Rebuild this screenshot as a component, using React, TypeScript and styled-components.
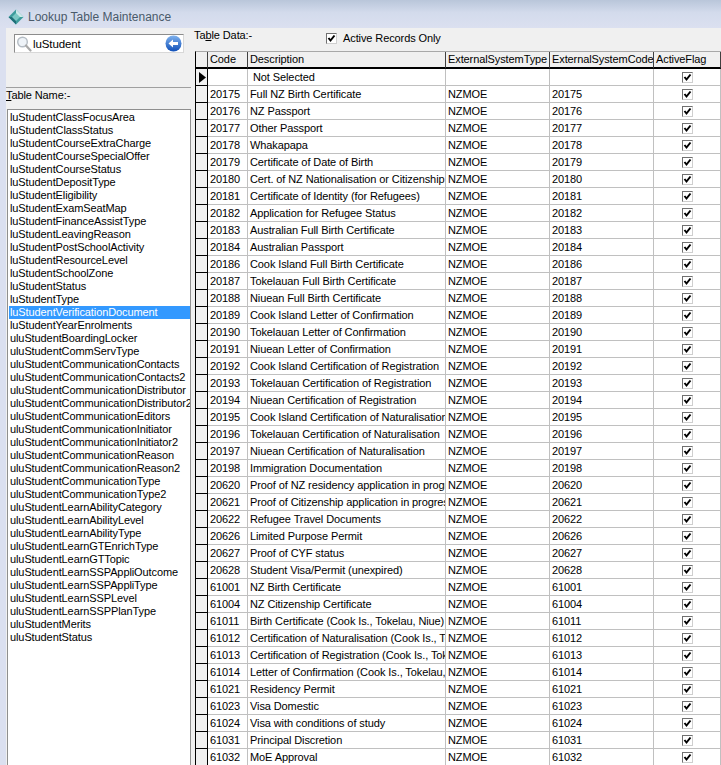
import React from 'react';
import styled, { createGlobalStyle } from 'styled-components';

const TABLE_NAMES = [
  'luStudentClassFocusArea', 'luStudentClassStatus', 'luStudentCourseExtraCharge', 'luStudentCourseSpecialOffer',
  'luStudentCourseStatus', 'luStudentDepositType', 'luStudentEligibility', 'luStudentExamSeatMap',
  'luStudentFinanceAssistType', 'luStudentLeavingReason', 'luStudentPostSchoolActivity', 'luStudentResourceLevel',
  'luStudentSchoolZone', 'luStudentStatus', 'luStudentType', 'luStudentVerificationDocument',
  'luStudentYearEnrolments', 'uluStudentBoardingLocker', 'uluStudentCommServType', 'uluStudentCommunicationContacts',
  'uluStudentCommunicationContacts2', 'uluStudentCommunicationDistributor', 'uluStudentCommunicationDistributor2',
  'uluStudentCommunicationEditors', 'uluStudentCommunicationInitiator', 'uluStudentCommunicationInitiator2',
  'uluStudentCommunicationReason', 'uluStudentCommunicationReason2', 'uluStudentCommunicationType',
  'uluStudentCommunicationType2', 'uluStudentLearnAbilityCategory', 'uluStudentLearnAbilityLevel',
  'uluStudentLearnAbilityType', 'uluStudentLearnGTEnrichType', 'uluStudentLearnGTTopic', 'uluStudentLearnSSPAppliOutcome',
  'uluStudentLearnSSPAppliType', 'uluStudentLearnSSPLevel', 'uluStudentLearnSSPPlanType', 'uluStudentMerits', 'uluStudentStatus',
];

const ROWS: [string, string][] = [
  ['20175', 'Full NZ Birth Certificate'],
  ['20176', 'NZ Passport'],
  ['20177', 'Other Passport'],
  ['20178', 'Whakapapa'],
  ['20179', 'Certificate of Date of Birth'],
  ['20180', 'Cert. of NZ Nationalisation or Citizenship'],
  ['20181', 'Certificate of Identity (for Refugees)'],
  ['20182', 'Application for Refugee Status'],
  ['20183', 'Australian Full Birth Certificate'],
  ['20184', 'Australian Passport'],
  ['20186', 'Cook Island Full Birth Certificate'],
  ['20187', 'Tokelauan Full Birth Certificate'],
  ['20188', 'Niuean Full Birth Certificate'],
  ['20189', 'Cook Island Letter of Confirmation'],
  ['20190', 'Tokelauan Letter of Confirmation'],
  ['20191', 'Niuean Letter of Confirmation'],
  ['20192', 'Cook Island Certification of Registration'],
  ['20193', 'Tokelauan Certification of Registration'],
  ['20194', 'Niuean Certification of Registration'],
  ['20195', 'Cook Island Certification of Naturalisation'],
  ['20196', 'Tokelauan Certification of Naturalisation'],
  ['20197', 'Niuean Certification of Naturalisation'],
  ['20198', 'Immigration Documentation'],
  ['20620', 'Proof of NZ residency application in progress'],
  ['20621', 'Proof of Citizenship application in progress'],
  ['20622', 'Refugee Travel Documents'],
  ['20626', 'Limited Purpose Permit'],
  ['20627', 'Proof of CYF status'],
  ['20628', 'Student Visa/Permit (unexpired)'],
  ['61001', 'NZ Birth Certificate'],
  ['61004', 'NZ Citizenship Certificate'],
  ['61011', 'Birth Certificate (Cook Is., Tokelau, Niue)'],
  ['61012', 'Certification of Naturalisation (Cook Is., Tokelau)'],
  ['61013', 'Certification of Registration (Cook Is., Tokelau)'],
  ['61014', 'Letter of Confirmation (Cook Is., Tokelau, Niue)'],
  ['61021', 'Residency Permit'],
  ['61023', 'Visa Domestic'],
  ['61024', 'Visa with conditions of study'],
  ['61031', 'Principal Discretion'],
  ['61032', 'MoE Approval'],
];

const GlobalStyle = createGlobalStyle`
  html, body {
    margin: 0;
    padding: 0;
    height: 765px;
    overflow: hidden;
    background: #dbe0f0;
    font-family: "Liberation Sans", Arial, sans-serif;
    font-size: 11px;
    letter-spacing: -0.1px;
    color: #000;
  }
`;

const S = {
  Window: styled.div`
    width: 721px;
    height: 765px;
    display: flex;
    flex-direction: column;
    overflow: hidden;
  `,
  TitleBar: styled.div`
    height: 28px;
    flex: none;
    display: flex;
    align-items: center;
    gap: 4px;
    padding: 5px 0 0 8px;
    box-sizing: border-box;
    background: linear-gradient(#b9c6da, #d3dbec 45%, #dbe0f0);
    color: #4a5a6a;
    font-size: 12px;
    letter-spacing: 0;
  `,
  Body: styled.div`
    flex: 1;
    display: flex;
    min-height: 0;
    margin-left: 6px;
    background: #f0f0f0;
  `,
  LeftPane: styled.div`
    width: 185px;
    flex: none;
    display: flex;
    flex-direction: column;
  `,
  SearchPanel: styled.div`
    height: 60px;
    flex: none;
    box-sizing: border-box;
    padding: 6px 0 0 8px;
    border-bottom: 1px solid #a0a0a0;
  `,
  SearchBox: styled.div`
    width: 170px;
    height: 19px;
    box-sizing: border-box;
    display: flex;
    align-items: center;
    gap: 1px;
    padding: 0 1px;
    background: #fff;
    border: 1px solid #8c8c8c;
    border-right-color: #d8d8d8;
    border-bottom-color: #d8d8d8;
    font-size: 11.5px;
  `,
  SearchText: styled.span`
    flex: 1;
  `,
  FieldLabel: styled.div`
    height: 21px;
    line-height: 15px;
    white-space: nowrap;
    u {
      text-decoration: underline;
    }
  `,
  List: styled.div`
    flex: 1;
    min-height: 0;
    width: 184px;
    box-sizing: border-box;
    margin-left: 1px;
    padding: 1px 0 0 1px;
    background: #fff;
    border: 1px solid #8f8f8f;
    border-bottom: none;
    overflow: hidden;
  `,
  ListItem: styled.div<{ $selected?: boolean }>`
    height: 13px;
    line-height: 13px;
    padding-left: 1px;
    white-space: nowrap;
    background: ${({ $selected }) => ($selected ? '#3399ff' : 'transparent')};
    color: ${({ $selected }) => ($selected ? '#fff' : '#000')};
  `,
  RightPane: styled.div`
    flex: 1;
    min-width: 0;
    display: flex;
    flex-direction: column;
    padding-left: 4px;
  `,
  Toolbar: styled.div`
    height: 23px;
    flex: none;
    display: flex;
    align-items: flex-start;
  `,
  DataLabel: styled.div`
    width: 132px;
    margin-left: -1px;
    line-height: 14px;
    u {
      text-decoration: underline;
    }
  `,
  ActiveOnly: styled.label`
    display: flex;
    align-items: center;
    gap: 6px;
    padding-top: 4px;
    line-height: 13px;
  `,
  Grid: styled.table`
    border-collapse: separate;
    border-spacing: 0;
    table-layout: fixed;
    width: 526px;
    border-top: 1px solid #a8a8a8;
    border-left: 1px solid #000;
  `,
  HeadCell: styled.th`
    height: 17px;
    padding: 0 0 1px 2px;
    box-sizing: border-box;
    background: #f0f0f0;
    font-weight: normal;
    text-align: left;
    white-space: nowrap;
    overflow: hidden;
    border-right: 1px solid #404040;
    border-bottom: 2px solid #000;
  `,
  Selector: styled.td`
    height: 17px;
    padding: 0;
    box-sizing: border-box;
    background: #f0f0f0;
    border-right: 1px solid #000;
    border-bottom: 1px solid #000;
    text-align: left;
    vertical-align: middle;
  `,
  Cell: styled.td<{ $indent?: boolean }>`
    height: 17px;
    padding: 0 0 0 ${({ $indent }) => ($indent ? '5px' : '2px')};
    box-sizing: border-box;
    background: #fff;
    white-space: nowrap;
    overflow: hidden;
    text-align: left;
    border-right: 1px solid #c0c0c0;
    border-bottom: 1px solid #c0c0c0;
  `,
  FlagCell: styled.td`
    height: 17px;
    padding: 0;
    box-sizing: border-box;
    background: #fff;
    text-align: center;
    border-right: 1px solid #c0c0c0;
    border-bottom: 1px solid #c0c0c0;
  `,
  Check: styled.span`
    display: inline-flex;
    align-items: center;
    justify-content: center;
    width: 11px;
    height: 11px;
    box-sizing: border-box;
    vertical-align: middle;
    background: #fff;
    border: 1px solid #707070;
    border-right-color: #cfcfcf;
    border-bottom-color: #cfcfcf;
  `,
};

const AppIcon = () => (
  <svg width="16" height="16" viewBox="0 0 16 16">
    <path d="M8 0.5 15.5 8 8 15.5 0.5 8z" fill="#3d9c9c" />
    <path d="M8 0.5 15.5 8H8z" fill="#cfeaea" />
    <path d="M0.5 8 8 15.5V8z" fill="#1f6f78" />
    <path d="M8 4 12 8 8 12 4 8z" fill="#7cc8c4" />
  </svg>
);

const SearchIcon = () => (
  <svg width="16" height="16" viewBox="0 0 16 16" style={{ flex: 'none' }}>
    <circle cx="6.5" cy="6" r="4.8" fill="#eef3f8" stroke="#b4bcc4" strokeWidth="1.4" />
    <path d="M10 9.5l4.5 5" stroke="#a9a9a9" strokeWidth="2.2" strokeLinecap="round" />
  </svg>
);

const BackIcon = () => (
  <svg width="17" height="17" viewBox="0 0 17 17" style={{ flex: 'none' }}>
    <defs>
      <linearGradient id="back" x1="0" y1="0" x2="0" y2="1">
        <stop offset="0" stopColor="#7fb2ee" />
        <stop offset="1" stopColor="#0f4fb8" />
      </linearGradient>
    </defs>
    <circle cx="8.5" cy="8.5" r="8" fill="url(#back)" />
    <path d="M3.5 8.5 8 4.5V7h5v3H8v2.5z" fill="#fff" />
  </svg>
);

const Tick = () => (
  <svg width="9" height="9" viewBox="0 0 9 9">
    <path d="M1.5 4 3.5 6.5 7.5 1.5" fill="none" stroke="#000" strokeWidth="2" />
  </svg>
);

const ActiveCheck = () => (
  <S.Check>
    <Tick />
  </S.Check>
);

const CurrentMarker = () => (
  <svg width="8" height="11" viewBox="0 0 8 11" style={{ display: 'block', marginLeft: 3 }}>
    <path d="M0 0 7 5.5 0 11z" fill="#000" />
  </svg>
);

const App = () => (
  <S.Window>
    <GlobalStyle />
    <S.TitleBar>
      <AppIcon />
      Lookup Table Maintenance
    </S.TitleBar>
    <S.Body>
      <S.LeftPane>
        <S.SearchPanel>
          <S.SearchBox>
            <SearchIcon />
            <S.SearchText>luStudent</S.SearchText>
            <BackIcon />
          </S.SearchBox>
        </S.SearchPanel>
        <S.FieldLabel>
          <u>T</u>able Name:-
        </S.FieldLabel>
        <S.List>
          {TABLE_NAMES.map((name) => (
            <S.ListItem key={name} $selected={name === 'luStudentVerificationDocument'}>
              {name}
            </S.ListItem>
          ))}
        </S.List>
      </S.LeftPane>
      <S.RightPane>
        <S.Toolbar>
          <S.DataLabel>
            Ta<u>b</u>le Data:-
          </S.DataLabel>
          <S.ActiveOnly>
            <ActiveCheck />
            Active Records Only
          </S.ActiveOnly>
        </S.Toolbar>
        <S.Grid>
          <colgroup>
            <col style={{ width: 12 }} />
            <col style={{ width: 40 }} />
            <col style={{ width: 198 }} />
            <col style={{ width: 104 }} />
            <col style={{ width: 104 }} />
            <col style={{ width: 67 }} />
          </colgroup>
          <thead>
            <tr>
              <S.HeadCell />
              <S.HeadCell>Code</S.HeadCell>
              <S.HeadCell>Description</S.HeadCell>
              <S.HeadCell>ExternalSystemType</S.HeadCell>
              <S.HeadCell>ExternalSystemCode</S.HeadCell>
              <S.HeadCell>ActiveFlag</S.HeadCell>
            </tr>
          </thead>
          <tbody>
            <tr>
              <S.Selector>
                <CurrentMarker />
              </S.Selector>
              <S.Cell />
              <S.Cell $indent>Not Selected</S.Cell>
              <S.Cell />
              <S.Cell />
              <S.FlagCell>
                <ActiveCheck />
              </S.FlagCell>
            </tr>
            {ROWS.map(([code, description]) => (
              <tr key={code}>
                <S.Selector />
                <S.Cell>{code}</S.Cell>
                <S.Cell>{description}</S.Cell>
                <S.Cell>NZMOE</S.Cell>
                <S.Cell>{code}</S.Cell>
                <S.FlagCell>
                  <ActiveCheck />
                </S.FlagCell>
              </tr>
            ))}
          </tbody>
        </S.Grid>
      </S.RightPane>
    </S.Body>
  </S.Window>
);

export default App;
